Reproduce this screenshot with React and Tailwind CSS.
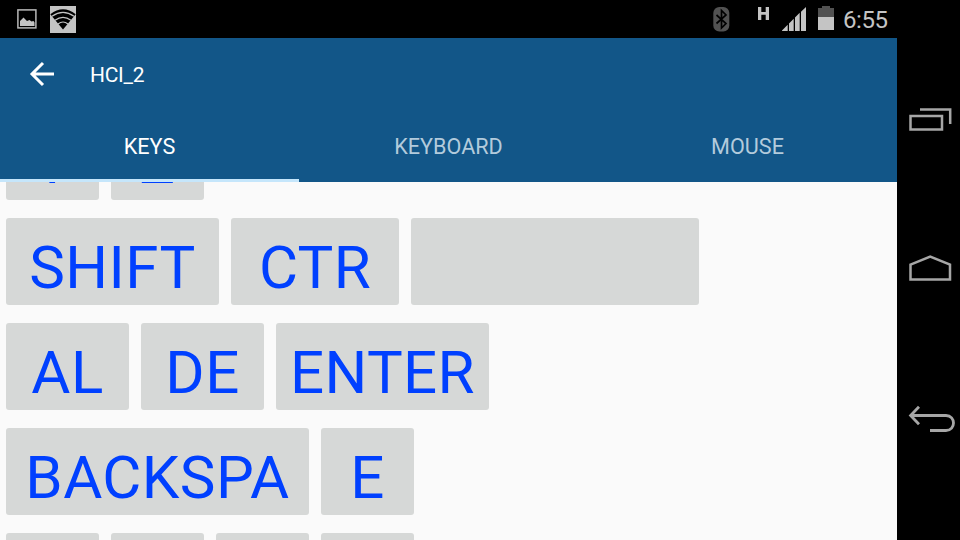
import React from 'react';

const KEY_ROWS = [
  [['Y', 93], ['Z', 93]],
  [['SHIFT', 213], ['CTR', 168], ['', 288]],
  [['AL', 123], ['DE', 123], ['ENTER', 213]],
  [['BACKSPA', 303], ['E', 93]],
  [['', 93], ['', 93], ['', 93], ['', 93]],
];

function Key({ label, width }) {
  return (
    <button
      className="h-[87px] shrink-0 overflow-hidden rounded-[3px] bg-[#d6d8d7] pt-[6px] text-center text-[60px] leading-[87px] tracking-[0.4px] whitespace-nowrap text-[#0040ff]"
      style={{ width }}
    >
      {label}
    </button>
  );
}

function StatusBar() {
  return (
    <div className="flex h-[38px] shrink-0 items-start bg-black text-[#c4c4c4]">
      <svg className="mt-[9px] ml-[17px] shrink-0" width="20" height="20" viewBox="0 0 20 20">
        <rect x="0.9" y="0.9" width="18" height="18" fill="none" stroke="#b8b8b8" strokeWidth="1.5" />
        <path d="M3 17v-5l3.500-3.500 3.500 3.500 2.500-1 2 1.500 2-.5 1 1.500V17z" fill="#c4c4c4" />
      </svg>
      <svg className="mt-[6px] ml-[13px] shrink-0" width="26" height="27" viewBox="0 0 26 27">
        <rect width="26" height="27" fill="#c4c4c4" />
        <path d="M0.3 8.2Q13-1.6 25.7 8.2L13 23.600z" fill="#000" />
        <g fill="none" stroke="#c4c4c4" strokeWidth="1.2">
          <path d="M2 10.300Q13 2.600 24 10.300" />
          <path d="M5 14.200Q13 8.400 21 14.200" />
          <path d="M8 18Q13 14 18 18" />
        </g>
      </svg>
      <div className="grow" />
      <svg className="mt-[7px] shrink-0" width="17" height="25" viewBox="0 0 17 25">
        <rect x="0.3" y="0" width="16" height="24.5" rx="6" fill="#525252" />
        <path d="M3.5 8L13 16.5 8.5 21V3.5L13 8 3.5 16.5" fill="none" stroke="#000" strokeWidth="1.7" />
      </svg>
      <svg className="mt-[7px] ml-[28px] shrink-0" width="11" height="13" viewBox="0 0 11 13">
        <path d="M0 0h3.3v4.9h4.4V0H11v13H7.700V7.700H3.300V13H0z" fill="#c4c4c4" />
      </svg>
      <svg className="mt-[7px] ml-[13px] shrink-0" width="24" height="24" viewBox="0 0 24 24">
        <path d="M0 24v-.5L5.700 17.800V24zM7 24V16.500L11.700 11.800V24zM13 24V10.500L17.700 5.800V24zM19 24V4.700L24 0V24z" fill="#c4c4c4" />
      </svg>
      <svg className="mt-[6px] ml-[12px] shrink-0" width="16" height="24" viewBox="0 0 16 24">
        <path d="M0 2h4V0h8v2h4v9H0z" fill="#525252" />
        <path d="M0 11h16v13H0z" fill="#c4c4c4" />
      </svg>
      <span className="mt-[6px] mr-[8px] ml-[9px] w-[46px] text-[24px] leading-[28px] tracking-[-0.4px]">6:55</span>
    </div>
  );
}

function NavBar() {
  return (
    <nav className="flex w-[63px] shrink-0 flex-col bg-black">
      <svg className="mt-[104px] ml-[10px] shrink-0" width="48" height="30" viewBox="0 0 48 30" fill="none" stroke="#a6a6a6" strokeWidth="2.500">
        <rect x="3.500" y="12" width="31.500" height="13.500" />
        <path d="M13 5.500H43.200V20" />
      </svg>
      <svg className="mt-[117px] ml-[10px] shrink-0" width="48" height="34" viewBox="0 0 48 34" fill="none" stroke="#a6a6a6" strokeWidth="2.500">
        <path d="M3.500 13.600L23.200 5.700 43 13.600V28.500H3.500z" />
      </svg>
      <svg className="mt-[117px] ml-[10px] shrink-0" width="50" height="34" viewBox="0 0 50 34" fill="none" stroke="#a6a6a6" strokeWidth="2.800">
        <path d="M12 4.800L3.600 13.500 12 22.300M4 13.500H39C49 13.500 49 28.500 39 28.500H23" />
      </svg>
    </nav>
  );
}

export default function App() {
  return (
    <div className="flex h-[540px] w-[960px] overflow-hidden bg-black font-[Roboto,sans-serif]">
      <div className="flex w-[897px] shrink-0 flex-col">
        <StatusBar />
        <header className="h-[144px] shrink-0 bg-[#125688] text-white">
          <div className="flex h-[72px] items-center">
            <svg className="ml-[29px] shrink-0" width="26" height="26" viewBox="0 0 26 26" fill="none" stroke="#fff" strokeWidth="3">
              <path d="M25 13H4M14 2L3 13 14 24" />
            </svg>
            <h1 className="ml-[35px] pt-[3px] text-[21px] tracking-[-0.3px]">HCI_2</h1>
          </div>
          <div className="grid h-[72px] grid-cols-3 text-center text-[21.600px] leading-[74px]">
            <div className="h-[72px] border-b-3 border-[#c5e6fb]">KEYS</div>
            <div className="text-[#b3cbdc]">KEYBOARD</div>
            <div className="text-[#b3cbdc]">MOUSE</div>
          </div>
        </header>
        <main className="min-h-0 grow overflow-hidden bg-[#fafafa] pl-[6px]">
          <div className="-mt-[69px] flex flex-col gap-[18px]">
            {KEY_ROWS.map((row, r) => (
              <div key={r} className="flex gap-3">
                {row.map(([label, width], i) => (
                  <Key key={i} label={label} width={width} />
                ))}
              </div>
            ))}
          </div>
        </main>
      </div>
      <NavBar />
    </div>
  );
}
